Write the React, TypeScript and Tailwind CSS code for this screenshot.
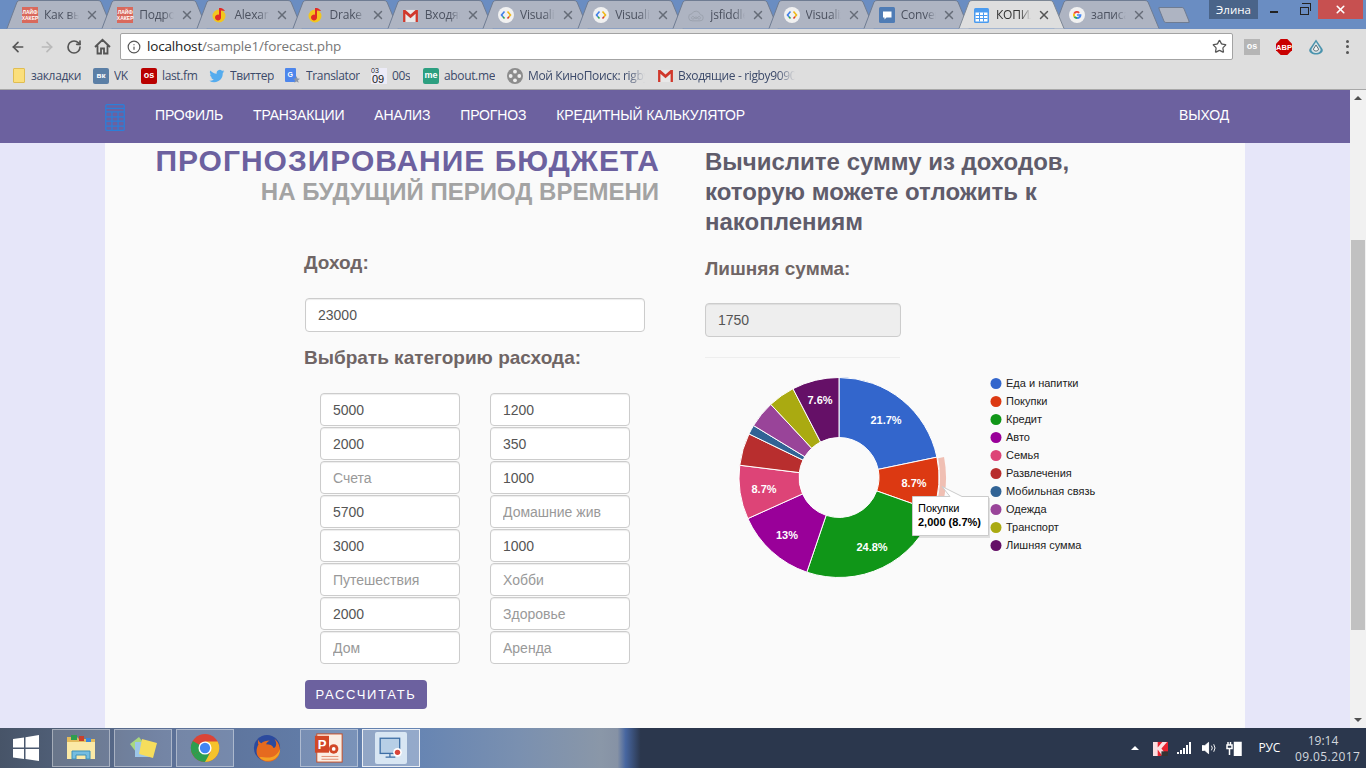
import { ArrowLeft, ArrowRight, Info, RotateCw, Star, X } from "lucide-react";
import type { ReactNode } from "react";

const CalcIcon = ({ color, className }: { color: string; className: string }) => (
  <svg viewBox="0 0 16 22" className={className} fill="none" stroke={color} strokeWidth="1">
    <rect x="0.5" y="0.5" width="15" height="21" rx="1" />
    <path d="M0.5 3.5h15M0.5 6.5h15M0.5 10.5h15M0.5 14h15M0.5 18h15M5.5 6.5v15M10.5 6.5v15" />
  </svg>
);

const TabCalc = () => (
  <svg viewBox="0 0 15 15" className="w-[15px] h-[15px]">
    <rect width="15" height="15" rx="1.5" fill="#4a9bf0" />
    <path d="M1.5 4.5h12v9h-12z" fill="#fff" />
    <path d="M1.5 7.5h12M1.5 10.5h12M5.5 4.5v9M9.5 4.5v9" stroke="#4a9bf0" />
  </svg>
);

const Lifehacker = () => (
  <div className="w-[16px] h-[16px] bg-[#d9695c] text-white text-[5px] leading-[6px] font-bold flex flex-col items-center justify-center font-['Liberation_Sans',sans-serif]">
    <span>ЛАЙФ</span>
    <span>ХАКЕР</span>
  </div>
);

const MusicIcon = () => (
  <svg viewBox="0 0 16 16" className="w-[16px] h-[16px]">
    <circle cx="7" cy="9" r="6.5" fill="#f2c61f" />
    <path d="M9 1v9.5a3 3 0 1 1-2-2.8V1z" fill="#e22b25" />
    <path d="M9 1c2 .5 3 1.5 4 3l-4-.5z" fill="#e22b25" />
  </svg>
);

const GmailIcon = () => (
  <svg viewBox="0 0 16 14" className="w-[15px] h-[13px]">
    <path d="M0 1h16v13H0z" fill="#e8e8e8" />
    <path d="M0 14V1h2.5L8 6l5.5-5H16v13h-2.5V5L8 10 2.5 5v9z" fill="#d0382c" />
  </svg>
);

const DevIcon = () => (
  <svg viewBox="0 0 16 16" className="w-[16px] h-[16px]" fill="none" strokeWidth="1.6">
    <circle cx="8" cy="8" r="8" fill="#f1f1f1" stroke="none" />
    <path d="M6.5 4.5 3.5 8l1.5 1.8" stroke="#3f7fe8" />
    <path d="M5 9.8l1.5 1.7" stroke="#31a353" />
    <path d="M9.5 4.5 12.5 8l-1.5 1.8" stroke="#f0b818" />
    <path d="M11 9.8l-1.5 1.7" stroke="#d8402f" />
  </svg>
);

const CloudIcon = () => (
  <svg viewBox="0 0 18 14" className="w-[17px] h-[13px]" fill="none" stroke="#9aa0ac" strokeWidth="1">
    <path d="M5 13a4 4 0 0 1-.6-8 5 5 0 0 1 9.4 1 3.5 3.5 0 0 1-.3 7z" />
    <path d="M7 9.5a1.5 1.5 0 1 0 0 .1c1 1 3 1 4 0a1.5 1.5 0 1 0 0-.1c-1-1-3-1-4 0z" />
  </svg>
);

const ChatIcon = () => (
  <svg viewBox="0 0 16 16" className="w-[16px] h-[16px]">
    <rect width="16" height="16" rx="1.5" fill="#4f7cb5" />
    <path d="M4 4.5h8.5v6H7.5L5.5 12.5v-2H4z" fill="#fff" />
  </svg>
);

const GoogleIcon = () => (
  <svg viewBox="0 0 16 16" className="w-[16px] h-[16px]">
    <circle cx="8" cy="8" r="8" fill="#f1f1f1" />
    <path d="M8 7.2h4.4c.3 2.8-1.6 4.8-4.4 4.8V10c1.2 0 2-.5 2.3-1.3H8z" fill="#4285f4" />
    <path d="M8 12a4 4 0 0 1-3.5-2l1.5-1.1A2.2 2.2 0 0 0 8 10z" fill="#34a853" />
    <path d="M4.5 10a4 4 0 0 1 0-4L6 7.1a2 2 0 0 0 0 1.8z" fill="#fbbc05" />
    <path d="M4.5 6A4 4 0 0 1 10.8 5.2L9.5 6.4A2.2 2.2 0 0 0 6 7.1z" fill="#ea4335" />
  </svg>
);

const tabs: { title: string; icon: ReactNode; active?: boolean }[] = [
  { title: "Как выбрать", icon: <Lifehacker /> },
  { title: "Подробнее", icon: <Lifehacker /> },
  { title: "Alexander", icon: <MusicIcon /> },
  { title: "Drake", icon: <MusicIcon /> },
  { title: "Входящие", icon: <GmailIcon /> },
  { title: "Visualiza", icon: <DevIcon /> },
  { title: "Visualiza", icon: <DevIcon /> },
  { title: "jsfiddle", icon: <CloudIcon /> },
  { title: "Visualiza", icon: <DevIcon /> },
  { title: "Conversa", icon: <ChatIcon /> },
  { title: "КОПИЛКА", icon: <TabCalc />, active: true },
  { title: "записать", icon: <GoogleIcon /> },
];

const Tab = ({ title, icon, active }: { title: string; icon: ReactNode; active?: boolean }) => (
  <div className={`relative w-[95.2px] h-full shrink-0 ${active ? "z-10" : ""}`}>
    <svg className="absolute left-0 top-0 w-[111px] h-[29px]" viewBox="0 0 111 29">
      <path
        d="M1 28.5 11 2Q12 .5 14 .5H92Q94 .5 95 2L106 28.5"
        fill={active ? "#dedede" : "#aeb4c2"}
        stroke={active ? "#7d8794" : "#6f7c92"}
      />
    </svg>
    <div className="relative h-full flex items-center pl-[16px] pt-[1px]">
      <div className="w-[16px] flex justify-center shrink-0">{icon}</div>
      <span
        className={`ml-[6px] w-[35px] overflow-hidden whitespace-nowrap text-[12px] tracking-[-0.2px] [mask-image:linear-gradient(to_right,black_70%,transparent)] ${
          active ? "text-[#333]" : "text-[#4c5260]"
        }`}
      >
        {title}
      </span>
      <X className={`ml-[6px] w-[14px] h-[14px] ${active ? "text-[#555]" : "text-[#666c78]"}`} strokeWidth={2.5} />
    </div>
  </div>
);

const bookmarks: { label: string; width: string; textWidth?: string; icon: ReactNode }[] = [
  {
    label: "закладки",
    width: "w-[83px]",
    icon: <div className="w-[12px] h-[15px] bg-[#fbdf7c] border border-[#e0bd52] rounded-[1px] ml-[3px] mr-[1px]" />,
  },
  {
    label: "VK",
    width: "w-[48px]",
    icon: (
      <div className="w-[16px] h-[16px] bg-[#5b7fa6] rounded-[2px] text-white text-[8px] font-bold flex items-center justify-center font-['Liberation_Sans',sans-serif]">
        вк
      </div>
    ),
  },
  {
    label: "last.fm",
    width: "w-[68px]",
    icon: (
      <div className="w-[16px] h-[16px] bg-[#b90000] rounded-[2px] text-white text-[9px] font-bold flex items-center justify-center font-['Liberation_Sans',sans-serif]">
        os
      </div>
    ),
  },
  {
    label: "Твиттер",
    width: "w-[76px]",
    icon: (
      <svg viewBox="0 0 24 24" className="w-[16px] h-[16px]" fill="#55acee">
        <path d="M23 5c-.8.4-1.700.6-2.600.7.900-.6 1.600-1.400 2-2.500-.9.500-1.900.9-2.900 1.100a4.600 4.600 0 0 0-7.900 4.200C7.800 8.300 4.400 6.500 2.100 3.700a4.600 4.600 0 0 0 1.400 6.200c-.7 0-1.400-.2-2.100-.6 0 2.300 1.600 4.200 3.700 4.600-.7.200-1.400.2-2.100.1.600 1.900 2.300 3.200 4.300 3.200A9.300 9.300 0 0 1 .5 19.100 13 13 0 0 0 20.600 7.500C21.500 6.800 22.300 6 23 5z" />
      </svg>
    ),
  },
  {
    label: "Translator",
    width: "w-[86px]",
    icon: (
      <svg viewBox="0 0 16 16" className="w-[16px] h-[16px]">
        <rect width="11" height="14" rx="1" fill="#4d86ec" />
        <text x="2.500" y="9" fontSize="7" fontWeight="700" fill="#fff" fontFamily="Liberation Sans">G</text>
        <path d="M11.500 8l1 2.500 2.500.2-2 1.600.7 2.500-2.200-1.400-2.200 1.400.7-2.500-2-1.600 2.500-.2z" fill="#8b96a8" />
      </svg>
    ),
  },
  {
    label: "00s",
    width: "w-[52px]",
    icon: (
      <div className="w-[16px] h-[16px] bg-[#ecebf7] text-[#222] font-['Liberation_Sans',sans-serif] relative overflow-hidden">
        <span className="absolute left-0 top-0 text-[7px] leading-[6px]">03</span>
        <span className="absolute left-[1px] top-[6px] text-[11px] leading-[10px]">09</span>
      </div>
    ),
  },
  {
    label: "about.me",
    width: "w-[84px]",
    icon: (
      <div className="w-[16px] h-[16px] bg-[#2c9f80] rounded-[2px] text-white text-[9px] font-bold flex items-center justify-center font-['Liberation_Sans',sans-serif]">
        me
      </div>
    ),
  },
  {
    label: "Мой КиноПоиск: rigby",
    width: "w-[150px]",
    textWidth: "w-[117px]",
    icon: (
      <svg viewBox="0 0 16 16" className="w-[16px] h-[16px]">
        <circle cx="8" cy="8" r="8" fill="#8c8c8c" />
        <g fill="#efefef">
          <circle cx="8" cy="3.700" r="1.900" />
          <circle cx="8" cy="12.300" r="1.900" />
          <circle cx="3.700" cy="8" r="1.900" />
          <circle cx="12.300" cy="8" r="1.900" />
        </g>
      </svg>
    ),
  },
  {
    label: "Входящие - rigby9090",
    width: "w-[140px]",
    textWidth: "w-[117px]",
    icon: <GmailIcon />,
  },
];

const incomes = ["5000", "2000", "", "5700", "3000", "", "2000", ""];
const incomeHints = ["", "", "Счета", "", "", "Путешествия", "", "Дом"];
const expenses = ["1200", "350", "1000", "", "1000", "", "", ""];
const expenseHints = ["", "", "", "Домашние жив", "", "Хобби", "Здоровье", "Аренда"];

const Field = ({ value, hint, className }: { value: string; hint?: string; className: string }) => (
  <input
    readOnly
    value={value}
    placeholder={hint}
    className={`block border border-[#ccc] rounded-[4px] shadow-[inset_0_1px_1px_rgba(0,0,0,0.075)] px-[12px] text-[14px] text-[#555] placeholder:text-[#999] outline-none ${className}`}
  />
);

const slices = [
  { name: "Еда и напитки", value: 5000, color: "#3366cc" },
  { name: "Покупки", value: 2000, color: "#dc3912" },
  { name: "Кредит", value: 5700, color: "#109618" },
  { name: "Авто", value: 3000, color: "#990099" },
  { name: "Семья", value: 2000, color: "#dd4477" },
  { name: "Развлечения", value: 1200, color: "#b82e2e" },
  { name: "Мобильная связь", value: 350, color: "#316395" },
  { name: "Одежда", value: 1000, color: "#994499" },
  { name: "Транспорт", value: 1000, color: "#aaaa11" },
  { name: "Лишняя сумма", value: 1750, color: "#651067" },
];

const CX = 839;
const CY = 477.5;

const point = (share: number, r: number) => {
  const a = share * Math.PI * 2;
  return `${CX + r * Math.sin(a)} ${CY - r * Math.cos(a)}`;
};

const arc = (from: number, to: number, outer: number, inner: number) => {
  const large = to - from > 0.5 ? 1 : 0;
  return `M${point(from, outer)}A${outer} ${outer} 0 ${large} 1 ${point(to, outer)}L${point(to, inner)}A${inner} ${inner} 0 ${large} 0 ${point(from, inner)}Z`;
};

const labels = [
  { text: "21.7%", x: 886, y: 424 },
  { text: "8.7%", x: 914, y: 487 },
  { text: "24.8%", x: 872, y: 551 },
  { text: "13%", x: 787, y: 539 },
  { text: "8.7%", x: 764, y: 493 },
  { text: "7.6%", x: 820, y: 404 },
];

const DonutChart = () => {
  let start = 0;
  return (
    <svg viewBox="705 365 400 240" className="w-[400px] h-[240px] block font-['Liberation_Sans',sans-serif]">
      {slices.map((s) => {
        const from = start;
        const to = start + s.value / 23000;
        start = to;
        return <path key={s.name} d={arc(from, to, 100, 40)} fill={s.color} stroke="#fff" strokeWidth="1" />;
      })}
      <path d={arc(5000 / 23000 + 0.002, 7000 / 23000 - 0.002, 107, 101)} fill="#dc3912" opacity="0.3" />
      {labels.map((l) => (
        <text key={l.x} x={l.x} y={l.y} textAnchor="middle" fontSize="11" fontWeight="700" fill="#fff">
          {l.text}
        </text>
      ))}
      {slices.map((s, i) => (
        <g key={s.name}>
          <circle cx="996" cy={383.500 + i * 18} r="5.500" fill={s.color} />
          <text x="1006" y={387 + i * 18} fontSize="11" fill="#222">
            {s.name}
          </text>
        </g>
      ))}
      <rect x="914" y="498" width="76" height="40" fill="#000" opacity="0.1" />
      <path
        d="M912.500 496.500H950L942 486.500 962 496.500H988.500V535.500H912.500Z"
        fill="#fff"
        stroke="#ccc"
        strokeWidth="1"
      />
      <text x="918" y="512" fontSize="11" fill="#000">Покупки</text>
      <text x="918" y="526" fontSize="11" fontWeight="700" fill="#000">2,000 (8.7%)</text>
    </svg>
  );
};

const ChromeLogo = () => (
  <svg viewBox="0 0 32 32" className="w-[30px] h-[30px]">
    <circle cx="16" cy="16" r="15" fill="#db4437" />
    <path d="M16 16 3 23.500A15 15 0 0 1 3 8.500L16 16z" fill="#2e9e4f" />
    <path d="M16 16 3 23.500A15 15 0 0 0 16 31l7.500-2z" fill="#2e9e4f" />
    <path d="M16 9h13.500A15 15 0 0 1 16 31l6-11z" fill="#f6c32c" />
    <circle cx="16" cy="16" r="7" fill="#fff" />
    <circle cx="16" cy="16" r="5.500" fill="#4285f4" />
  </svg>
);

const FoxLogo = () => (
  <svg viewBox="0 0 32 32" className="w-[30px] h-[30px]">
    <circle cx="16" cy="16" r="14" fill="#2b4a9e" />
    <path d="M6 6c1 4 0 5 1 6-3 5-3 11 1 15 5 5 14 5 19-1 5-6 3-15-3-20 3 5 2 9-1 10-1-3-4-4-8-4 1-2 2-3 4-4-4 0-7 1-9 3-2-1-3-3-4-5z" fill="#e66a1f" />
    <path d="M8 26c5 5 14 5 19-1 2-2 3-5 3-8-3 7-9 10-15 9-3 0-5-1-7 0z" fill="#f4a225" />
  </svg>
);

const PowerPointLogo = () => (
  <svg viewBox="0 0 32 32" className="w-[30px] h-[30px]">
    <rect x="3" y="1" width="27" height="30" fill="#fbeee4" stroke="#c6481f" />
    <rect x="1" y="3" width="15" height="18" fill="#d24726" />
    <text x="4" y="17" fontSize="14" fontWeight="700" fill="#fff" fontFamily="Liberation Sans">P</text>
    <circle cx="21" cy="17" r="5" fill="#d24726" />
    <circle cx="21" cy="17" r="2" fill="#fff" />
    <path d="M8 25h18M8 28h18" stroke="#e08a6c" />
  </svg>
);

const FolderLogo = () => (
  <svg viewBox="0 0 32 32" className="w-[32px] h-[32px]">
    <path d="M2 5h10l2 2h16v20H2z" fill="#e3bb5c" />
    <path d="M6 3h6v5H6z" fill="#2e9e4f" />
    <path d="M14 4h5v5h-5z" fill="#c8402c" />
    <path d="M21 6h5v5h-5z" fill="#3c86d8" />
    <path d="M2 10h28v17H2z" fill="#fbe9a6" />
    <path d="M7 27v-8h18v8h-4v-4H11v4z" fill="#75bde0" stroke="#3e90b8" />
  </svg>
);

const NotesLogo = () => (
  <svg viewBox="0 0 32 32" className="w-[32px] h-[32px]">
    <path d="M3 12 12 5l6 8-9 7z" fill="#a8d87f" />
    <path d="M8 10h14v15H8z" fill="#9cc6e8" />
    <path d="M15 7l15 4-4 15-14-4z" fill="#f6dd5c" />
  </svg>
);

const ScreenLogo = () => (
  <div className="w-[32px] h-[32px] bg-[#d8e6f3] rounded-[2px] flex items-center justify-center">
    <svg viewBox="0 0 24 24" className="w-[26px] h-[26px]">
      <rect x="2" y="3" width="18" height="14" fill="#b7cfe6" stroke="#3d6ea5" strokeWidth="1.200" />
      <path d="M7 20.500h9M11 17v3" stroke="#3d6ea5" strokeWidth="1.200" />
      <circle cx="18" cy="16" r="4" fill="#fff" />
      <circle cx="18" cy="16" r="2.500" fill="#d9453a" />
    </svg>
  </div>
);

const taskItems = [
  { icon: <FolderLogo />, boxed: true },
  { icon: <NotesLogo />, boxed: true },
  { icon: <ChromeLogo />, boxed: true },
  { icon: <FoxLogo />, boxed: false },
  { icon: <PowerPointLogo />, boxed: true },
  { icon: <ScreenLogo />, boxed: true, selected: true },
];

export default function App() {
  return (
    <div className="h-[768px] w-[1366px] overflow-hidden flex flex-col font-['Liberation_Sans',Arial,sans-serif]">
      {/* браузер */}
      <div className="h-[29px] shrink-0 bg-[#6a8dc2] flex font-['Open_Sans',sans-serif]">
        <div className="flex pl-[6px] h-full">
          {tabs.map((t, i) => (
            <Tab key={i} {...t} />
          ))}
          <div className="ml-[13px] mt-[7px] w-[26px] h-[16px] bg-[#aeb4c2] border border-[#6f7c92] rounded-[2px] skew-x-[22deg]" />
        </div>
        <div className="ml-auto flex items-start shrink-0">
          <div className="w-[49px] h-[19px] bg-[#4a6489] text-white text-[11.5px] flex items-center justify-center">Элина</div>
          <div className="w-[32px] h-[19px] flex items-center justify-center">
            <div className="w-[8px] h-[2px] bg-[#222] mt-[5px]" />
          </div>
          <div className="w-[28px] h-[19px] flex items-center justify-center">
            <div className="relative w-[9px] h-[8px] mt-[2px] border-[1.5px] border-[#222]">
              <div className="absolute -top-[4.5px] left-[1.5px] w-[9px] h-[8px] border-t-[1.5px] border-r-[1.5px] border-[#222]" />
            </div>
          </div>
          <div className="w-[45px] h-[19px] bg-[#c75050] flex items-center justify-center mr-[3px]">
            <X className="w-[13px] h-[13px] text-white" strokeWidth={3} />
          </div>
        </div>
      </div>

      <div className="h-[32px] shrink-0 bg-[#dedede] flex items-center pt-[3px]">
        <ArrowLeft className="ml-[10px] w-[16px] h-[16px] text-[#555]" strokeWidth={2.5} />
        <ArrowRight className="ml-[13px] w-[16px] h-[16px] text-[#b9b9b9]" strokeWidth={2.5} />
        <RotateCw className="ml-[11px] w-[16px] h-[16px] text-[#555]" strokeWidth={2.5} />
        <svg viewBox="0 0 17 17" className="ml-[12px] w-[17px] h-[17px]" fill="none" stroke="#555" strokeWidth="1.800">
          <path d="M1 9 8.500 1.800 16 9M3.500 7.500V15.500H7V10.500H10V15.500H13.500V7.500" />
        </svg>
        <div className="ml-[9px] w-[1113px] h-[27px] bg-white border border-[#a3a3a3] rounded-[2px] flex items-center">
          <Info className="ml-[6px] w-[14px] h-[14px] text-[#555]" strokeWidth={2} />
          <span className="ml-[6px] text-[13.500px] tracking-[-0.17px] leading-none font-['Open_Sans',sans-serif]">
            <span className="text-[#222]">localhost</span>
            <span className="text-[#777]">/sample1/forecast.php</span>
          </span>
          <Star className="ml-auto mr-[5px] w-[15px] h-[15px] text-[#555]" strokeWidth={2} />
        </div>
        <div className="ml-[11px] w-[16px] h-[16px] bg-[#b5b5b5] text-white text-[9px] font-bold flex items-center justify-center">os</div>
        <svg viewBox="0 0 16 16" className="ml-[16px] w-[16px] h-[16px] font-['Liberation_Sans',sans-serif]">
          <path d="M4.700 0h6.600L16 4.700v6.600L11.300 16H4.700L0 11.300V4.700z" fill="#c90000" />
          <text x="8" y="10.800" textAnchor="middle" fontSize="7.500" fontWeight="700" fill="#fff">ABP</text>
        </svg>
        <svg viewBox="0 0 16 16" className="ml-[16px] w-[16px] h-[16px]" fill="none">
          <path d="M8 .5 14.500 10c1.500 3.500-3 5.500-6.500 5.500S0 13.500 1.500 10z" fill="#4a93ad" />
          <path d="M8 3 12.500 10C13 12.500 10.500 14 8 14s-5-1.500-4.500-4z" fill="#d8e2e6" />
          <path d="M8 6 10.500 10C10.500 11.500 9.200 12 8 12s-2.500-.5-2.500-2z" fill="#f2f5f6" stroke="#5b6c74" />
        </svg>
        <div className="ml-[22px] flex flex-col gap-[2.500px]">
          <div className="w-[3px] h-[3px] rounded-full bg-[#555]" />
          <div className="w-[3px] h-[3px] rounded-full bg-[#555]" />
          <div className="w-[3px] h-[3px] rounded-full bg-[#555]" />
        </div>
      </div>

      <div className="h-[29px] shrink-0 bg-[#dedede] border-b border-[#a8a8a8] flex items-center pl-[10px] pt-[1px] font-['Open_Sans',sans-serif]">
        {bookmarks.map((b) => (
          <div key={b.label} className={`flex items-center shrink-0 ${b.width}`}>
            <div className="w-[16px] flex justify-center shrink-0">{b.icon}</div>
            <span
              className={`ml-[5px] text-[12px] tracking-[-0.35px] text-[#3c4a6a] whitespace-nowrap overflow-hidden ${
                b.textWidth ? `${b.textWidth} [mask-image:linear-gradient(to_right,black_85%,transparent)]` : ""
              }`}
            >
              {b.label}
            </span>
          </div>
        ))}
      </div>

      {/* страница */}
      <div className="flex-1 flex min-h-0">
        <div className="w-[1350px] flex flex-col">
          <nav className="h-[53px] shrink-0 bg-[#6c619f] pl-[105px] pr-[121px] pb-[2px] flex items-center text-[14px] text-white tracking-[-0.15px]">
            <CalcIcon color="#2b7fd8" className="w-[20px] h-[27px] mt-[3px]" />
            <a className="ml-[30px]">ПРОФИЛЬ</a>
            <a className="ml-[30px]">ТРАНЗАКЦИИ</a>
            <a className="ml-[30px]">АНАЛИЗ</a>
            <a className="ml-[30px]">ПРОГНОЗ</a>
            <a className="ml-[30px]">КРЕДИТНЫЙ КАЛЬКУЛЯТОР</a>
            <a className="ml-auto">ВЫХОД</a>
          </nav>
          <div className="flex-1 bg-[#e6e6f9] min-h-0">
            <div className="w-[1140px] h-full mx-auto bg-[#fafafa] flex">
              <div className="w-[600px] shrink-0 flex flex-col items-start">
                <h1 className="self-end mr-[45px] mt-[1px] text-[30px] leading-[34px] font-bold text-[#6c619f] tracking-[1px]">
                  ПРОГНОЗИРОВАНИЕ БЮДЖЕТА
                </h1>
                <h2 className="self-end mr-[46px] text-[24px] leading-[28px] font-bold text-[#a3a3a3]">
                  НА БУДУЩИЙ ПЕРИОД ВРЕМЕНИ
                </h2>
                <h3 className="ml-[199px] mt-[45px] text-[19px] leading-[24px] font-bold text-[#6f6565]">Доход:</h3>
                <Field value="23000" className="ml-[200px] mt-[23px] w-[340px] h-[34px] bg-white" />
                <h3 className="ml-[199px] mt-[14px] text-[19px] leading-[24px] font-bold text-[#6f6565]">
                  Выбрать категорию расхода:
                </h3>
                <div className="ml-[215px] mt-[23px] grid grid-cols-[140px_140px] gap-x-[30px] gap-y-[1px]">
                  {incomes.map((v, i) => (
                    <div key={i} className="contents">
                      <Field value={v} hint={incomeHints[i]} className="w-[140px] h-[33px] bg-white" />
                      <Field value={expenses[i]} hint={expenseHints[i]} className="w-[140px] h-[33px] bg-white" />
                    </div>
                  ))}
                </div>
                <button className="ml-[200px] mt-[16px] w-[122px] h-[29px] bg-[#6c619f] rounded-[4px] text-white text-[13px] tracking-[1.7px]">
                  РАССЧИТАТЬ
                </button>
              </div>
              <div className="flex-1 flex flex-col items-start">
                <h2 className="mt-[4px] w-[400px] text-[24px] leading-[30px] font-bold text-[#5f5c6b]">
                  Вычислите сумму из доходов, которую можете отложить к накоплениям
                </h2>
                <h3 className="mt-[20px] text-[19px] leading-[24px] font-bold text-[#6f6565]">Лишняя сумма:</h3>
                <Field value="1750" className="mt-[22px] w-[196px] h-[34px] bg-[#eee]" />
                <div className="mt-[20px] w-[195px] border-t border-[#eee]" />
                <div className="mt-[7px]">
                  <DonutChart />
                </div>
              </div>
            </div>
          </div>
        </div>
        <div className="w-[16px] bg-[#f1f1f1] flex flex-col items-center">
          <div className="w-0 h-0 mt-[6px] border-x-[4px] border-x-transparent border-b-[4px] border-b-[#505050]" />
          <div className="w-[14px] h-[390px] mt-[140px] bg-[#c1c1c1]" />
          <div className="mt-auto mb-[6px] w-0 h-0 border-x-[4px] border-x-transparent border-t-[4px] border-t-[#505050]" />
        </div>
      </div>

      {/* панель задач */}
      <div className="h-[40px] shrink-0 flex items-center bg-[linear-gradient(to_right,#475468_0%,#4f5e76_4%,#5c7096_12%,#6584b3_30%,#7a90b0_38%,#8a97a8_44%,#8692a5_45.2%,#4766a0_45.8%,#2b374d_46.9%,#2b374d_100%)]">
        <div className="w-[52px] h-full flex items-center justify-center">
          <svg viewBox="0 0 26 26" className="w-[26px] h-[26px]" fill="#fff">
            <path d="M0 4 11 2.500V12.500H0zM12.500 2.300 26 0V12.500H12.500zM0 14H11V24L0 22.500zM12.500 14H26V26L12.500 24z" />
          </svg>
        </div>
        <div className="flex gap-[4px] h-full">
          {taskItems.map((t, i) => (
            <div
              key={i}
              className={`w-[58px] h-[38px] mt-[1px] flex items-center justify-center ${
                t.selected
                  ? "bg-white/30 border border-white/80"
                  : t.boxed
                    ? "bg-white/15 border border-white/40"
                    : ""
              }`}
            >
              {t.icon}
            </div>
          ))}
        </div>
        <div className="ml-auto flex items-center text-white font-['Open_Sans',sans-serif]">
          <div className="w-0 h-0 border-x-[4px] border-x-transparent border-b-[4px] border-b-white" />
          <svg viewBox="0 0 16 16" className="ml-[14px] w-[15px] h-[15px]">
            <path d="M0 1h16v15H0z" fill="#e8222f" />
            <path d="M5 1v6l5-6h5L9 8l6 8H10L5 9v7H0V1z" fill="#fff" opacity="0.85" />
            <rect x="9" y="11" width="7" height="5" fill="#333" />
          </svg>
          <svg viewBox="0 0 15 12" className="ml-[9px] w-[15px] h-[12px]" fill="#fff">
            <path d="M0 10h2v2H0zM3 8h2v4H3zM6 6h2v6H6zM9 3h2v9H9zM12 0h2v12h-2z" />
          </svg>
          <svg viewBox="0 0 16 14" className="ml-[10px] w-[15px] h-[14px]" fill="none" stroke="#fff">
            <path d="M0 4.500h3L7 1v12L3 9.500H0z" fill="#fff" />
            <path d="M10 4.500a4 4 0 0 1 0 5M12.500 3a7 7 0 0 1 0 8" />
          </svg>
          <svg viewBox="0 0 16 16" className="ml-[9px] w-[16px] h-[16px]" fill="none" stroke="#fff" strokeWidth="1.500">
            <path d="M2 2v3M4.500 2v3M1 5h5v3.500H1zM3.500 8.500V15" />
            <rect x="8.500" y="2.500" width="6.500" height="13" fill="#fff" />
          </svg>
          <span className="ml-[16px] text-[12px] tracking-[-0.2px]">РУС</span>
          <div className="ml-[15px] mr-[15px] w-[56px] text-center text-[12px] leading-[16px] text-[#d3d7de] pt-[1px]">
            <div>19:14</div>
            <div className="tracking-[0.4px] whitespace-nowrap">09.05.2017</div>
          </div>
        </div>
      </div>
    </div>
  );
}
